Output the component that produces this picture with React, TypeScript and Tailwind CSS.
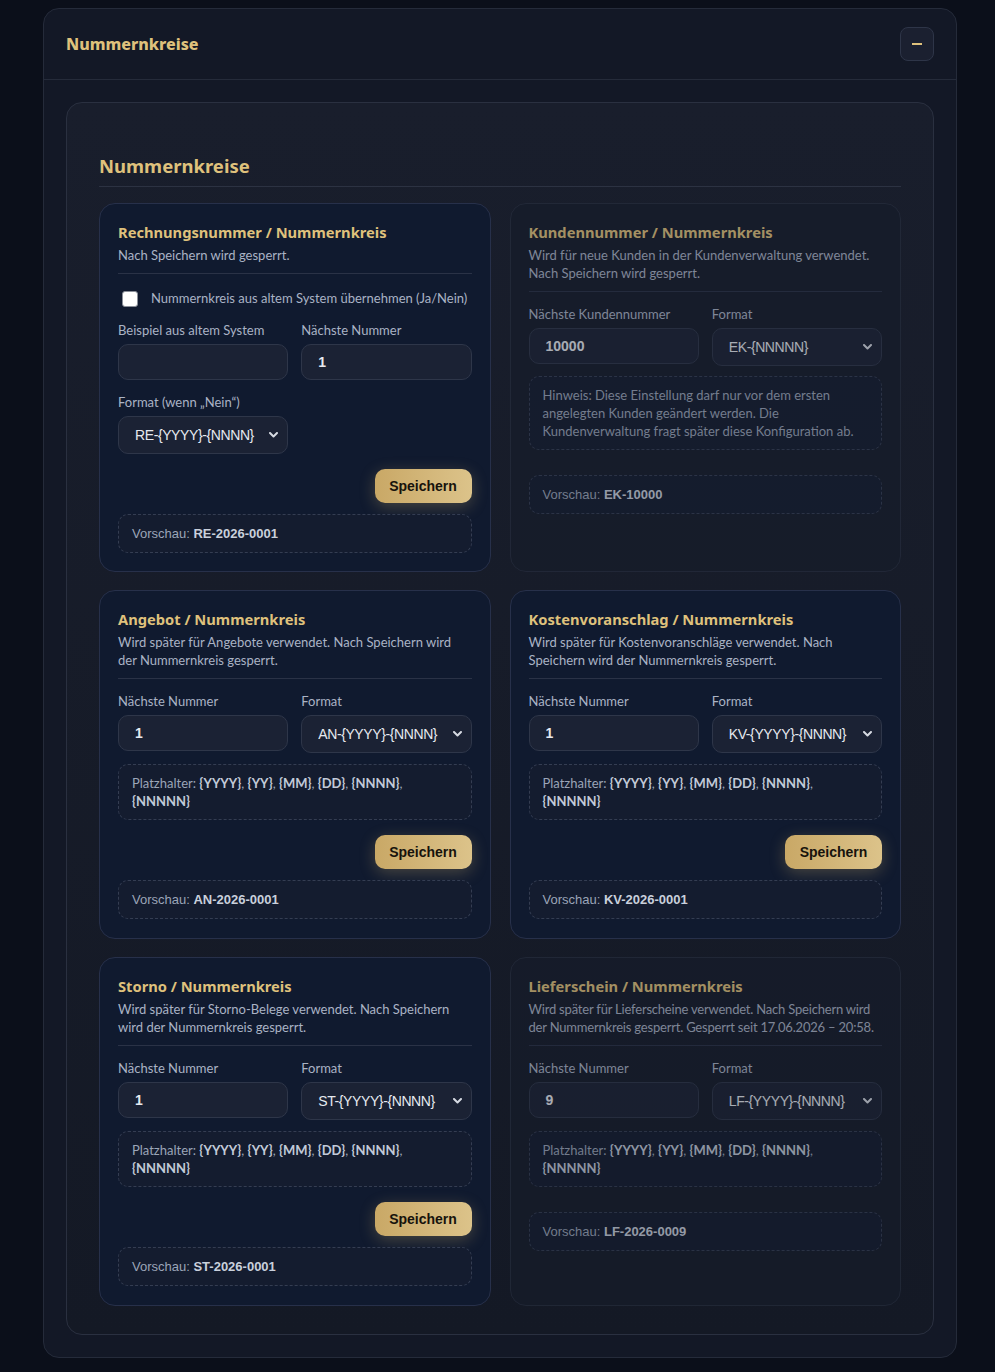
import React from "react"

const body = "font-['Lato','Noto_Sans',sans-serif]"
const head = "font-['Noto_Sans',sans-serif]"
const arial = "font-['Liberation_Sans',Arial,sans-serif]"

type CardProps = {
  title: string
  desc: React.ReactNode
  disabled?: boolean
  pb?: string
  children: React.ReactNode
}

function Card({ title, desc, disabled, pb = "pb-[19px]", children }: CardProps) {
  return (
    <div
      className={
        disabled
          ? `flex flex-col rounded-2xl border border-[#262d3d] bg-[#161c2a] px-[18px] pt-[18px] opacity-70 ${pb}`
          : `flex flex-col rounded-2xl border border-[#27304a] bg-[#101a2f] px-[18px] pt-[18px] ${pb}`
      }
    >
      <div className="border-b border-[#2a3246] pb-[9px]">
        <h3 className={`text-[14.7px] font-bold leading-5 text-[#dfc17c] ${head}`}>{title}</h3>
        <p className="mt-1 text-[13px] leading-[18px] text-[#aab3c5]">{desc}</p>
      </div>
      {children}
    </div>
  )
}

function Label({ children }: { children: React.ReactNode }) {
  return <div className="mb-[5px] text-[13px] leading-[18px] text-[#aab3c5]">{children}</div>
}

function TextInput({ value }: { value: string }) {
  return (
    <div
      className={`flex h-9 items-center rounded-[10px] border border-[#2e3649] bg-[#1b2234] px-4 text-[14px] font-bold text-[#e6e9ef] ${arial}`}
    >
      {value}
    </div>
  )
}

function Select({ value }: { value: string }) {
  return (
    <div className="relative">
      <select
        defaultValue={value}
        className={`h-[38px] w-full appearance-none rounded-[10px] border border-[#2e3649] bg-[#1b2234] pl-4 pr-6 text-[14px] tracking-[-0.4px] text-[#e6e9ef] outline-none ${arial}`}
      >
        <option>{value}</option>
      </select>
      <svg
        className="pointer-events-none absolute right-[10px] top-1/2 -translate-y-1/2"
        width="9"
        height="6"
        viewBox="0 0 9 6"
        fill="none"
      >
        <path d="M1 1l3.5 3.5L8 1" stroke="#d6dae2" strokeWidth="2" strokeLinecap="round" strokeLinejoin="round" />
      </svg>
    </div>
  )
}

function Preview({ value }: { value: string }) {
  return (
    <div
      className={`flex h-[39px] items-center rounded-[10px] border border-dashed border-[#343d52] bg-[#141c2f] px-[13px] text-[13px] text-[#9ba5b8] ${arial}`}
    >
      Vorschau:&nbsp;<b className="font-bold text-[#c9d0dc]">{value}</b>
    </div>
  )
}

function Placeholders() {
  const b = "font-bold text-[#c2cad8]"
  return (
    <div className="mt-[11px] rounded-[10px] border border-dashed border-[#343d52] bg-[#141c2f] px-[13px] py-[9px] text-[13px] leading-[18px] text-[#9ba5b8]">
      Platzhalter: <b className={b}>{"{YYYY}"}</b>, <b className={b}>{"{YY}"}</b>, <b className={b}>{"{MM}"}</b>,{" "}
      <b className={b}>{"{DD}"}</b>, <b className={b}>{"{NNNN}"}</b>,<br />
      <b className={b}>{"{NNNNN}"}</b>
    </div>
  )
}

function SaveButton() {
  return (
    <div className="mt-[15px] flex justify-end">
      <button
        className={`h-[34px] w-[97px] rounded-[10px] bg-gradient-to-r from-[#c9a866] to-[#dcc38a] text-[14px] font-bold text-[#17130c] shadow-[0_4px_16px_rgba(214,182,112,0.28)] ${arial}`}
      >
        Speichern
      </button>
    </div>
  )
}

function PairRow({ left, right }: { left: React.ReactNode; right: React.ReactNode }) {
  return (
    <div className="mt-[13px] grid grid-cols-2 gap-[13px]">
      {left}
      {right}
    </div>
  )
}

function StandardCard({
  title,
  desc,
  next,
  format,
  preview,
  disabled,
}: {
  title: string
  desc: React.ReactNode
  next: string
  format: string
  preview: string
  disabled?: boolean
}) {
  return (
    <Card title={title} desc={desc} disabled={disabled}>
      <PairRow
        left={
          <div>
            <Label>Nächste Nummer</Label>
            <TextInput value={next} />
          </div>
        }
        right={
          <div>
            <Label>Format</Label>
            <Select value={format} />
          </div>
        }
      />
      <Placeholders />
      {disabled ? <div className="h-[25px]" /> : <SaveButton />}
      <div className={disabled ? "" : "mt-[11px]"}>
        <Preview value={preview} />
      </div>
    </Card>
  )
}

export default function App() {
  return (
    <div className={`min-h-[1372px] bg-[#0b0f1a] pt-2 ${body}`}>
      <div className="ml-[43px] w-[914px] rounded-2xl border border-[#252b3a] bg-[#131826]">
        <div className="flex h-[71px] items-center justify-between border-b border-[#252b3a] px-[22px]">
          <h2 className={`text-[16px] font-extrabold text-[#dfc17c] ${head}`}>Nummernkreise</h2>
          <button className="flex h-[34px] w-[34px] items-center justify-center rounded-lg border border-[#2e3548] bg-[#1b2030]">
            <span className="block h-[2px] w-[10px] bg-[#dfc17c]" />
          </button>
        </div>

        <div className="p-[22px]">
          <div className="rounded-2xl border border-[#2a3040] bg-gradient-to-b from-[#191e2c] to-[#141925] px-[32px] pb-[28px] pt-[48px]">
            <h2
              className={`border-b border-[#2c3242] pb-[5px] text-[18.5px] font-bold leading-[30px] text-[#dfc17c] ${head}`}
            >
              Nummernkreise
            </h2>

            <div className="mt-[16px] grid grid-cols-2 gap-x-[19px] gap-y-[18px]">
              <Card title="Rechnungsnummer / Nummernkreis" desc="Nach Speichern wird gesperrt." pb="pb-[18px]">
                <label className="mt-[16px] flex h-[18px] items-center gap-[13px] text-[13px] text-[#aab3c5]">
                  <span className="ml-1 block h-4 w-4 shrink-0 rounded-[3px] border border-[#8a8f99] bg-white" />
                  Nummernkreis aus altem System übernehmen (Ja/Nein)
                </label>
                <PairRow
                  left={
                    <div>
                      <Label>Beispiel aus altem System</Label>
                      <TextInput value="" />
                    </div>
                  }
                  right={
                    <div>
                      <Label>Nächste Nummer</Label>
                      <TextInput value="1" />
                    </div>
                  }
                />
                <div className="mt-[13px] grid grid-cols-2 gap-[13px]">
                  <div>
                    <Label>Format (wenn „Nein“)</Label>
                    <Select value="RE-{YYYY}-{NNNN}" />
                  </div>
                </div>
                <SaveButton />
                <div className="mt-[11px]">
                  <Preview value="RE-2026-0001" />
                </div>
              </Card>

              <Card
                title="Kundennummer / Nummernkreis"
                desc="Wird für neue Kunden in der Kundenverwaltung verwendet. Nach Speichern wird gesperrt."
                disabled
              >
                <PairRow
                  left={
                    <div>
                      <Label>Nächste Kundennummer</Label>
                      <TextInput value="10000" />
                    </div>
                  }
                  right={
                    <div>
                      <Label>Format</Label>
                      <Select value="EK-{NNNNN}" />
                    </div>
                  }
                />
                <div className="mt-[10px] rounded-[10px] border border-dashed border-[#343d52] bg-[#141c2f] px-[13px] py-[9px] text-[13px] leading-[18px] text-[#9ba5b8]">
                  Hinweis: Diese Einstellung darf nur vor dem ersten
                  <br />
                  angelegten Kunden geändert werden. Die
                  <br />
                  Kundenverwaltung fragt später diese Konfiguration ab.
                </div>
                <div className="mt-[25px]">
                  <Preview value="EK-10000" />
                </div>
              </Card>

              <StandardCard
                title="Angebot / Nummernkreis"
                desc="Wird später für Angebote verwendet. Nach Speichern wird der Nummernkreis gesperrt."
                next="1"
                format="AN-{YYYY}-{NNNN}"
                preview="AN-2026-0001"
              />
              <StandardCard
                title="Kostenvoranschlag / Nummernkreis"
                desc="Wird später für Kostenvoranschläge verwendet. Nach Speichern wird der Nummernkreis gesperrt."
                next="1"
                format="KV-{YYYY}-{NNNN}"
                preview="KV-2026-0001"
              />
              <StandardCard
                title="Storno / Nummernkreis"
                desc="Wird später für Storno-Belege verwendet. Nach Speichern wird der Nummernkreis gesperrt."
                next="1"
                format="ST-{YYYY}-{NNNN}"
                preview="ST-2026-0001"
              />
              <StandardCard
                title="Lieferschein / Nummernkreis"
                desc={
                  <span className="block whitespace-nowrap tracking-[-0.2px]">
                    Wird später für Lieferscheine verwendet. Nach Speichern wird
                    <br />
                    der Nummernkreis gesperrt. Gesperrt seit 17.06.2026 – 20:58.
                  </span>
                }
                next="9"
                format="LF-{YYYY}-{NNNN}"
                preview="LF-2026-0009"
                disabled
              />
            </div>
          </div>
        </div>
      </div>
    </div>
  )
}
